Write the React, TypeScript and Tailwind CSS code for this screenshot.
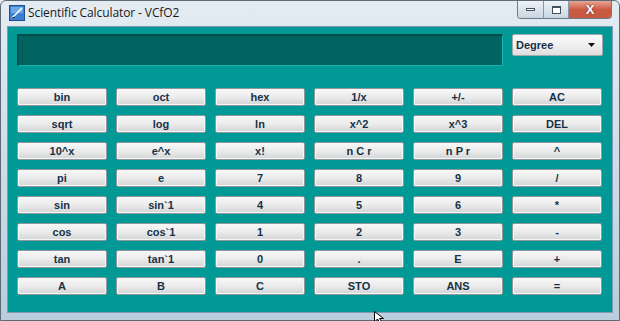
import React from 'react';

const rows: string[][] = [
  ['bin', 'oct', 'hex', '1/x', '+/-', 'AC'],
  ['sqrt', 'log', 'ln', 'x^2', 'x^3', 'DEL'],
  ['10^x', 'e^x', 'x!', 'n C r', 'n P r', '^'],
  ['pi', 'e', '7', '8', '9', '/'],
  ['sin', 'sin`1', '4', '5', '6', '*'],
  ['cos', 'cos`1', '1', '2', '3', '-'],
  ['tan', 'tan`1', '0', '.', 'E', '+'],
  ['A', 'B', 'C', 'STO', 'ANS', '='],
];

const font = { fontFamily: '"Liberation Sans", Arial, sans-serif' };

const CalcButton: React.FC<{ label: string }> = ({ label }) => (
  <button className="h-[18px] w-[90px] rounded-[2px] border border-[#8f999d] bg-gradient-to-b from-[#f8f8f8] via-[#ebebeb] to-[#d2d4d5] shadow-[inset_0_0_0_1px_#f7f7f7] text-[11px] font-bold leading-none text-[#163247] flex items-center justify-center">
    {label}
  </button>
);

const App: React.FC = () => {
  return (
    <div className="relative w-[620px] h-[321px] overflow-hidden bg-gradient-to-b from-[#e4ecf2] via-[#cfdde8] to-[#b9cddd]" style={font}>
      <div className="absolute inset-0 border border-[#5d6b78] rounded-t-[6px] pointer-events-none" />
      {/* title bar */}
      <div className="h-[26px] flex items-center pl-[9px] relative">
        <svg width="16" height="16" viewBox="0 0 16 16" className="mr-[3px]">
          <rect x="0.5" y="0.5" width="15" height="15" fill="#3d7fd0" stroke="#1f4f8f" />
          <rect x="2" y="2" width="12" height="6" fill="#8fc1f0" opacity="0.6" />
          <path d="M3 13 L13 3" stroke="#ffffff" strokeWidth="1.6" />
          <path d="M3 13 L6 12" stroke="#1b2a44" strokeWidth="1" />
        </svg>
        <span className="text-[12px] text-[#1a1a1a] tracking-[-0.1px]" style={{ fontFamily: '"Open Sans", "Liberation Sans", sans-serif' }}>
          Scientific Calculator - VCfO2
        </span>
        <div className="absolute right-[8px] top-[1px] flex h-[18px] rounded-b-[4px] border border-t-0 border-[#6b7a88] overflow-hidden">
          <div className="w-[26px] flex items-center justify-center bg-gradient-to-b from-[#eef3f7] to-[#c9d6e1] border-r border-[#8898a6]">
            <div className="w-[9px] h-[3px] bg-white border border-[#44525e]" />
          </div>
          <div className="w-[25px] flex items-center justify-center bg-gradient-to-b from-[#eef3f7] to-[#c9d6e1] border-r border-[#8898a6]">
            <div className="w-[9px] h-[8px] bg-white border border-[#44525e] border-t-2" />
          </div>
          <div className="w-[42px] flex items-center justify-center bg-gradient-to-b from-[#e8a596] via-[#cc5a45] to-[#c45a40]">
            <span className="text-[13px] font-bold text-white leading-none [text-shadow:0_0_2px_#5a1a10]">X</span>
          </div>
        </div>
      </div>
      {/* client area */}
      <div className="ml-[7px] mr-[7px] h-[287px] border border-[#7e9bb3] bg-[#009996] pl-[9px] pr-[9px] pt-[7px]">
        <div className="flex gap-[9px] items-start">
          <div className="flex-1 h-[32px] bg-[#016360] border-t-2 border-l-2 border-[#004d4a] border-b border-r border-b-[#1ab3ae] border-r-[#1ab3ae]" />
          <div className="w-[91px] h-[22px] rounded-[2px] border border-[#a2aaae] bg-gradient-to-b from-[#fbfbfb] via-[#f0f0f0] to-[#dedede] flex items-center justify-between pl-[3px] pr-[7px]">
            <span className="text-[11px] font-bold text-[#163247]">Degree</span>
            <svg width="7" height="4" viewBox="0 0 7 4">
              <path d="M0 0 H7 L3.5 4 Z" fill="#111" />
            </svg>
          </div>
        </div>
        <div className="mt-[22px] flex flex-col gap-[9px]">
          {rows.map((row, i) => (
            <div key={i} className="flex gap-[9px]">
              {row.map((label) => (
                <CalcButton key={label} label={label} />
              ))}
            </div>
          ))}
        </div>
      </div>
      {/* mouse pointer */}
      <svg className="absolute left-[374px] top-[311px]" width="12" height="12" viewBox="0 0 12 12">
        <path d="M0.5 0.5 L0.5 11 L3.5 8 L6 12 L8 11 L5.5 7.5 L9.5 7.5 Z" fill="#fff" stroke="#000" strokeWidth="1" />
      </svg>
    </div>
  );
};

export default App;
